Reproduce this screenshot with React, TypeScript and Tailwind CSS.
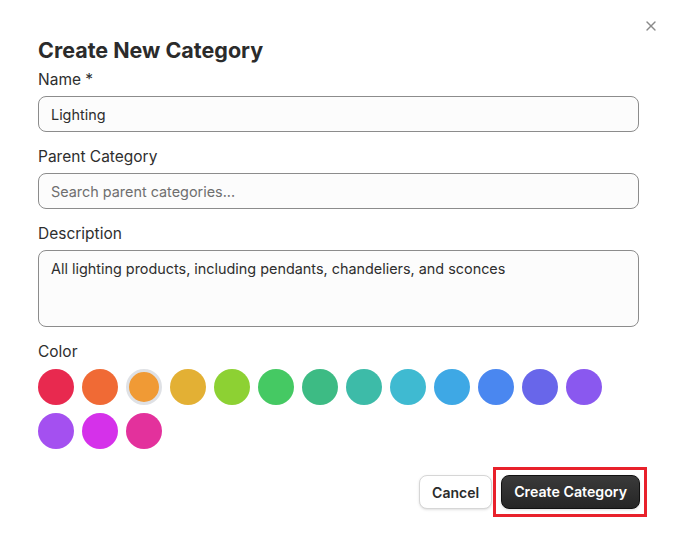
import { useState } from "react";
import { X } from "lucide-react";

const colors = [
  "#e8294f",
  "#f06a35",
  "#f09a35",
  "#e3b034",
  "#8dd133",
  "#45c963",
  "#3dbb84",
  "#3dbba8",
  "#3fbad1",
  "#3ea8e5",
  "#4a87f0",
  "#6866ea",
  "#8a58ef",
  "#a450f0",
  "#d531ea",
  "#e3319c",
];

export default function App() {
  const [name, setName] = useState("Lighting");
  const [parent, setParent] = useState("");
  const [description, setDescription] = useState(
    "All lighting products, including pendants, chandeliers, and sconces"
  );
  const [color, setColor] = useState(colors[2]);

  return (
    <div
      className="min-h-screen bg-white text-[#2e2e2e]"
      style={{ fontFamily: "Inter, 'Noto Sans', sans-serif" }}
    >
      <div className="relative pl-[38px] pr-[39px] pt-[36px]">
        <button className="absolute right-[20px] top-[18px] text-[#8a8a8a]">
          <X size={16} strokeWidth={2} />
        </button>

        <h1 className="text-[21.5px] leading-7 font-bold text-[#2b2b2b]">
          Create New Category
        </h1>

        <div className="mt-[6px] flex flex-col gap-[15px] pr-px">
          <div>
            <label className="block text-[15.5px] leading-5 mb-[6px]">Name *</label>
            <input
              value={name}
              onChange={(e) => setName(e.target.value)}
              className="w-full h-[36px] px-3 rounded-lg border border-[#8c8c8c] bg-[#fcfcfc] text-[14.4px] text-[#2e2e2e] outline-none"
            />
          </div>

          <div>
            <label className="block text-[15.5px] leading-5 mb-[6px]">
              Parent Category
            </label>
            <input
              value={parent}
              onChange={(e) => setParent(e.target.value)}
              placeholder="Search parent categories..."
              className="w-full h-[36px] px-3 rounded-lg border border-[#8c8c8c] bg-[#fcfcfc] text-[14.4px] text-[#2e2e2e] placeholder:text-[#6f6f6f] outline-none"
            />
          </div>

          <div>
            <label className="block text-[15.5px] leading-5 mb-[6px]">Description</label>
            <textarea
              value={description}
              onChange={(e) => setDescription(e.target.value)}
              className="block w-full h-[77px] px-3 py-2 rounded-lg border border-[#8c8c8c] bg-[#fcfcfc] text-[14.4px] leading-5 text-[#2e2e2e] resize-none outline-none"
            />
          </div>

          <div>
            <label className="block text-[15.5px] leading-5 mb-[7px]">Color</label>
            <div className="flex flex-wrap gap-2">
              {colors.map((c) => (
                <button
                  key={c}
                  onClick={() => setColor(c)}
                  className={
                    c === color
                      ? "w-9 h-9 rounded-full border-[3px] border-[#dfe1e5]"
                      : "w-9 h-9 rounded-full"
                  }
                  style={{ backgroundColor: c }}
                />
              ))}
            </div>
          </div>
        </div>

        <div className="mt-[26px] flex justify-end gap-[9px]">
          <button className="h-[34px] px-3 rounded-lg border border-[#d6d6d6] bg-white text-[14px] font-semibold text-[#2b2b2b] shadow-sm">
            Cancel
          </button>
          <span className="relative flex">
            <button className="h-[34px] px-3 rounded-lg border border-[#111111] bg-gradient-to-b from-[#3a3a3a] to-[#262626] text-[14.2px] font-semibold text-white shadow-sm">
              Create Category
            </button>
            <span className="pointer-events-none absolute -left-[8px] -right-[7px] -inset-y-[8px] border-[3px] border-[#e8212b]" />
          </span>
        </div>
      </div>
    </div>
  );
}
